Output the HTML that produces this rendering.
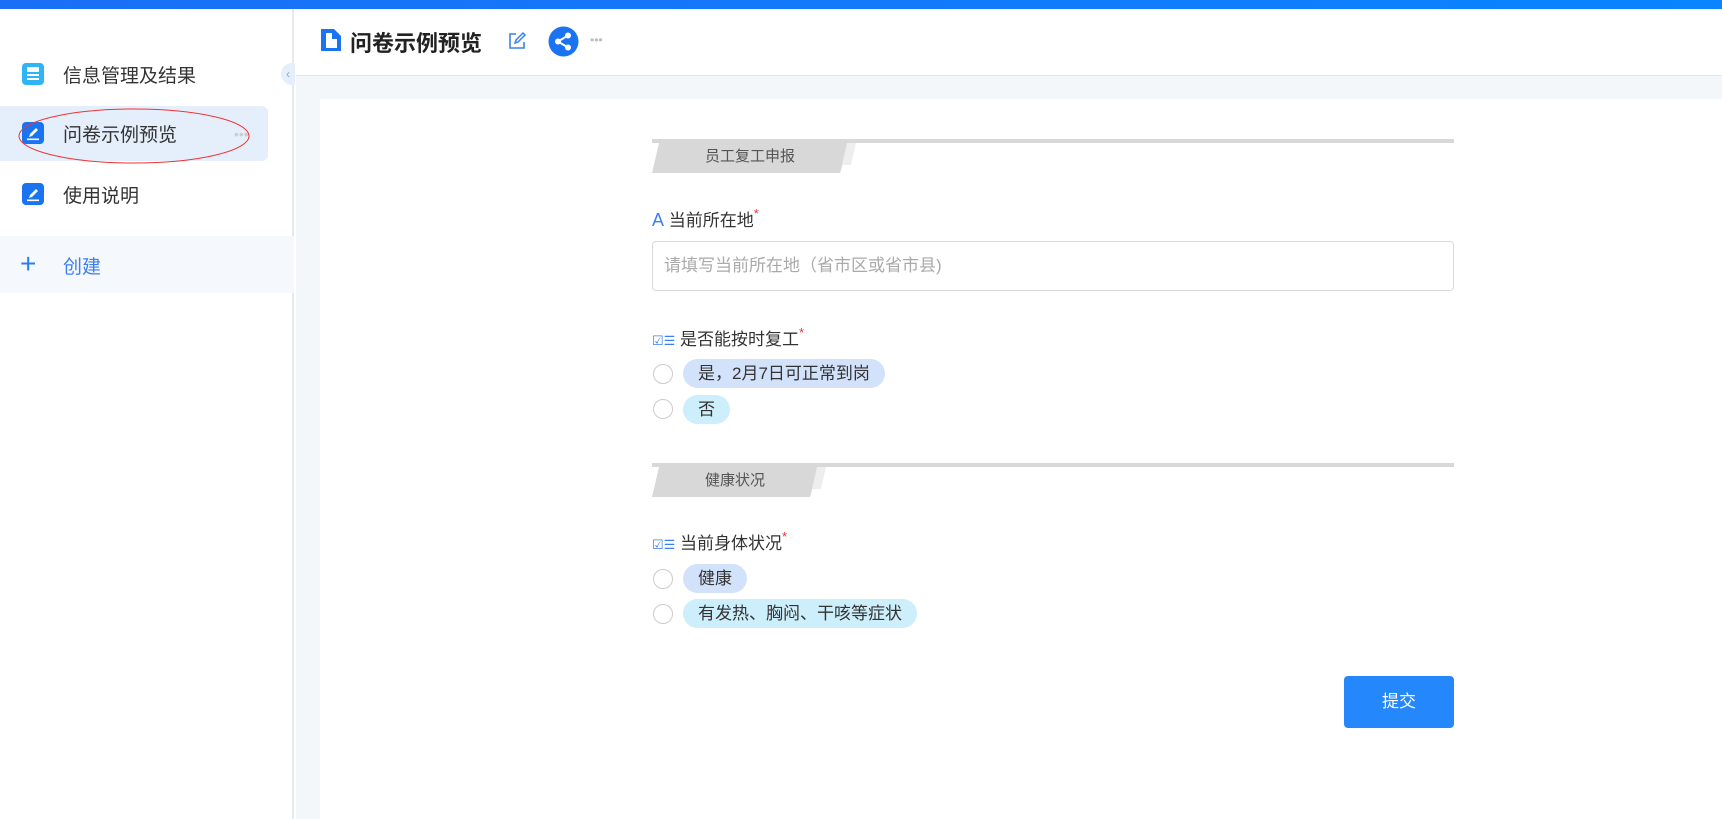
<!DOCTYPE html>
<html><head><meta charset="utf-8"><style>
*{margin:0;padding:0;box-sizing:border-box}
body{width:1722px;height:819px;overflow:hidden;background:#fff;font-family:"Liberation Sans","Noto Sans CJK SC",sans-serif;position:relative;color:#333}
.a{position:absolute}
.topbar{left:0;top:0;width:1722px;height:9px;background:linear-gradient(90deg,#1a6ff5,#0a84ff)}
.side{left:0;top:9px;width:294px;height:810px;background:#fff;border-right:2px solid #e6e9ee}
.item{left:0;width:268px;height:55px;font-size:19px;color:#333;display:flex;align-items:center;padding-left:63px}
.ic{position:absolute;left:22px;top:16px;width:22px;height:22px;border-radius:4px;background:#1a73f0}
.main{left:296px;top:75px;width:1426px;height:744px;background:#f4f7fa;border-top:1px solid #e2e5ea}
.card{left:320px;top:99px;width:1402px;height:720px;background:#fff}
.band{left:652px;height:34px;width:802px}
.band .line{position:absolute;left:0;top:0;width:802px;height:4px;background:#d8d8d8}
.band .p{position:absolute;left:0;top:0;height:34px;background:#d8d8d8;clip-path:polygon(8px 0,100% 0,calc(100% - 10px) 100%,0 100%);font-size:15px;color:#555;padding-left:53px;line-height:36px}
.band .s{position:absolute;top:4px;height:22px;width:14px;background:#eee;clip-path:polygon(5px 0,100% 0,calc(100% - 5px) 100%,0 100%)}
.lbl{left:652px;font-size:17px;color:#333}
.lbl b{color:#e33;font-weight:normal;font-size:13px;vertical-align:top}
.radio{width:20px;height:20px;border:1px solid #ccc;border-radius:50%;left:653px}
.pill{left:683px;height:29px;border-radius:15px;font-size:17px;line-height:29px;padding:0 15px;color:#333}
</style></head><body>
<div class="a topbar"></div>
<div class="a side"></div>
<div class="a item" style="top:47px"><span class="ic" style="background:#2fb5f5"><svg width="22" height="22"><rect x="5" y="4" width="12" height="5" rx="1" fill="#fff"/><rect x="5" y="11" width="12" height="2" fill="#fff"/><rect x="5" y="15" width="12" height="2" fill="#fff"/></svg></span>信息管理及结果</div>
<div class="a item" style="top:106px;background:#e5effc;border-radius:0 6px 6px 0">
<span class="ic"><svg width="22" height="22"><path d="M7 15l1-3 6-6 2 2-6 6z" fill="#fff"/><rect x="5" y="16.5" width="12" height="1.6" fill="#fff"/></svg></span>问卷示例预览<span style="position:absolute;left:234px;color:#ccc;font-size:14px">•••</span></div>
<svg class="a" style="left:9px;top:104px" width="250" height="64"><ellipse cx="125" cy="32" rx="115" ry="27" fill="none" stroke="#e33" stroke-width="1"/></svg>
<div class="a item" style="top:167px"><span class="ic"><svg width="22" height="22"><path d="M7 15l1-3 6-6 2 2-6 6z" fill="#fff"/><rect x="5" y="16.5" width="12" height="1.6" fill="#fff"/></svg></span>使用说明</div>
<div class="a" style="left:0;top:236px;width:294px;height:57px;background:#f5f8fd"></div>
<div class="a" style="left:20px;top:252px;font-size:28px;color:#2a7ef0;line-height:24px;font-weight:300">+</div>
<div class="a" style="left:63px;top:252px;font-size:19px;color:#3b7ff0">创建</div>
<div class="a" style="left:281px;top:63px;width:14px;height:22px;border-radius:11px 0 0 11px;background:#e5effc;color:#8ab;font-size:12px;line-height:22px;text-align:center">‹</div>
<div class="a" style="left:296px;top:9px;width:1426px;height:66px;background:#fff"></div>
<svg class="a" style="left:319px;top:27px" width="24" height="26"><path d="M2 2h13l7 7v15H2z" fill="#1a73f0"/><path d="M7 6h6v6h5v9H7z" fill="#fff"/></svg>
<div class="a" style="left:350px;top:26px;font-size:22px;font-weight:bold;color:#222">问卷示例预览</div>
<svg class="a" style="left:507px;top:31px" width="20" height="20"><path d="M9 3H3v14h14v-6" fill="none" stroke="#3a80f0" stroke-width="1.6"/><path d="M8 12l1-3 7-7 2 2-7 7z" fill="none" stroke="#3a80f0" stroke-width="1.5"/></svg>
<svg class="a" style="left:548px;top:26px" width="31" height="31"><circle cx="15.5" cy="15.5" r="15" fill="#1a73f0"/><circle cx="20" cy="9.5" r="3" fill="#fff"/><circle cx="10" cy="15.5" r="3" fill="#fff"/><circle cx="20" cy="21.5" r="3" fill="#fff"/><path d="M20 9.5L10 15.5 20 21.5" stroke="#fff" stroke-width="2" fill="none"/></svg>
<div class="a" style="left:590px;top:33px;color:#bbb;font-size:12px">•••</div>
<div class="a main"></div>
<div class="a card"></div>

<div class="a band" style="top:139px"><div class="line"></div><div class="p" style="width:198px">员工复工申报</div><div class="s" style="left:190px"></div></div>
<div class="a lbl" style="top:206px"><span style="color:#3a80f0;font-size:18px">A</span> 当前所在地<b>*</b></div>
<div class="a" style="left:652px;top:241px;width:802px;height:50px;border:1px solid #d9d9d9;border-radius:4px;font-size:17px;color:#aaa;line-height:48px;padding-left:11px">请填写当前所在地（省市区或省市县)</div>
<div class="a lbl" style="top:325px"><span style="color:#3a80f0;font-size:13px">☑☰</span> 是否能按时复工<b>*</b></div>
<div class="a radio" style="top:364px"></div>
<div class="a pill" style="top:359px;background:#d3e2fb">是，2月7日可正常到岗</div>
<div class="a radio" style="top:399px"></div>
<div class="a pill" style="top:395px;background:#cdeefb">否</div>

<div class="a band" style="top:463px"><div class="line"></div><div class="p" style="width:168px">健康状况</div><div class="s" style="left:160px"></div></div>
<div class="a lbl" style="top:529px"><span style="color:#3a80f0;font-size:13px">☑☰</span> 当前身体状况<b>*</b></div>
<div class="a radio" style="top:569px"></div>
<div class="a pill" style="top:564px;background:#d3e2fb">健康</div>
<div class="a radio" style="top:604px"></div>
<div class="a pill" style="top:599px;background:#cdeefb">有发热、胸闷、干咳等症状</div>

<div class="a" style="left:1344px;top:676px;width:110px;height:52px;background:#2487fb;border-radius:4px;color:#fff;font-size:17px;text-align:center;line-height:52px">提交</div>
</body></html>
